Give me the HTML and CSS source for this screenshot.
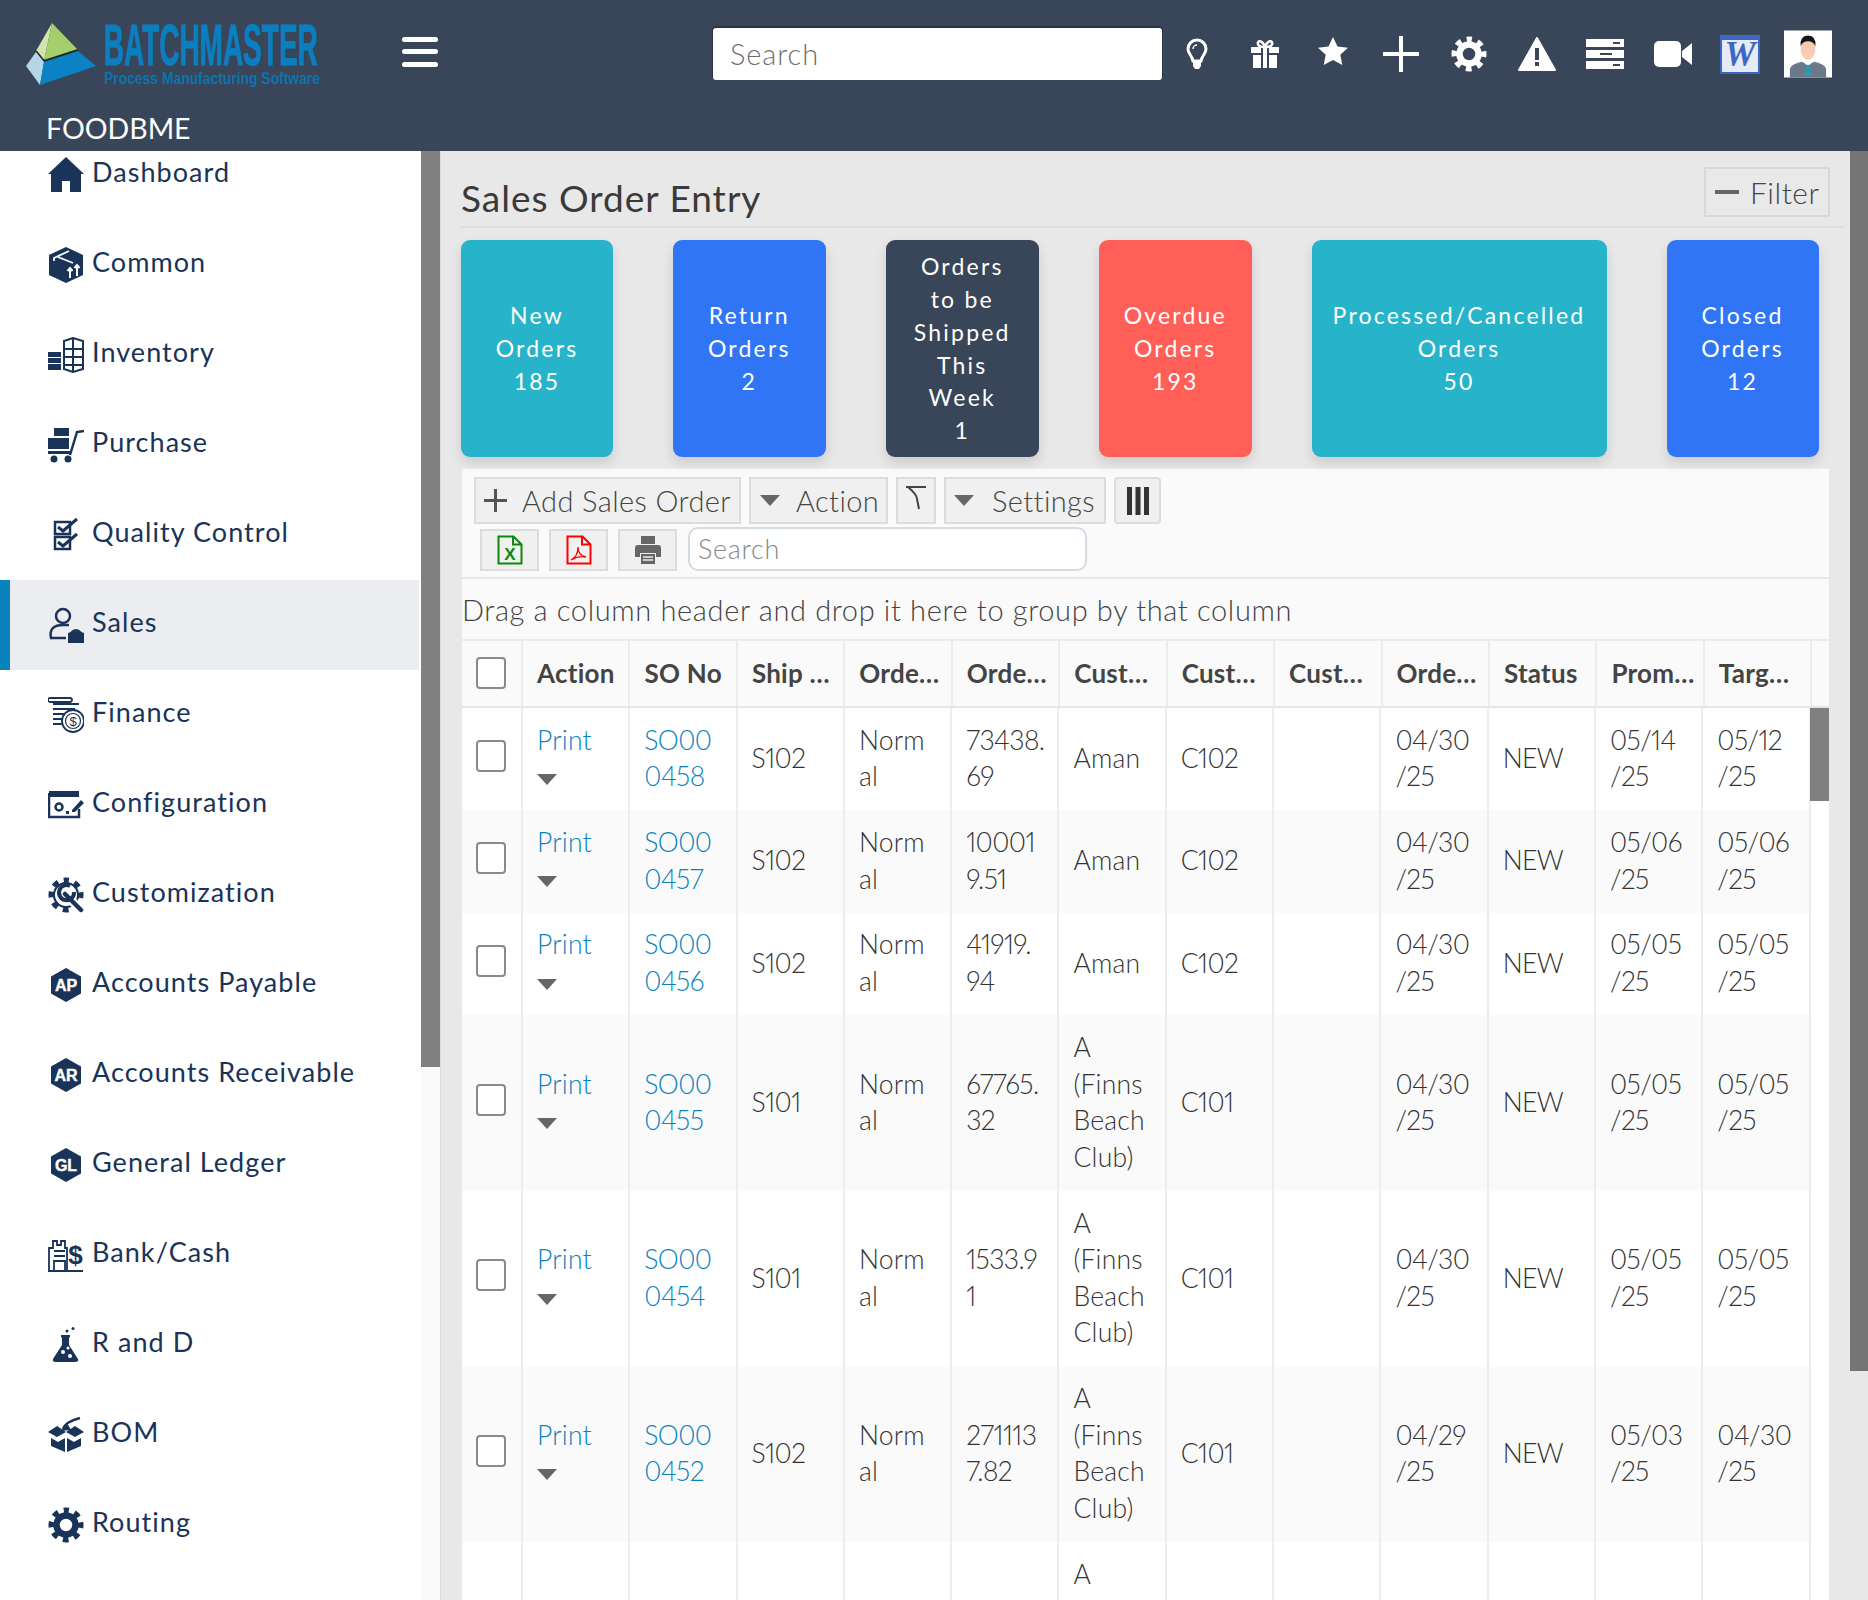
FILE: index.html
```html
<!DOCTYPE html>
<html lang="en">
<head>
<meta charset="utf-8">
<title>Sales Order Entry</title>
<link rel="stylesheet" href="styles.css">
</head>
<body>
<header class="topbar">
  <div class="topbar-row">
    <svg class="logo" viewBox="0 0 310 70" aria-label="BatchMaster">
      <polygon points="26,4 10,32 18,42" fill="#d3e3ae"/>
      <polygon points="26,4 18,42 52,31" fill="#a5cf6d"/>
      <polyline points="10,32 18,42 52,31" fill="none" stroke="#1d2a1e" stroke-width="2"/>
      <polygon points="10,33 0,47 14,66 18,43" fill="#b3d7e8"/>
      <polygon points="18,43 52,32 70,47 14,66" fill="#0a82c4"/>
      <text class="logo-word" x="78" y="46" textLength="214" lengthAdjust="spacingAndGlyphs">BATCHMASTER</text>
      <text class="logo-sub" x="78" y="65" textLength="216" lengthAdjust="spacingAndGlyphs">Process Manufacturing Software</text>
    </svg>
    <button class="burger" aria-label="Menu"><span></span><span></span><span></span></button>
    <div class="top-search">Search</div>
    <div class="top-icons">
      <div class="slot"><svg width="24" height="32" viewBox="0 0 24 32"><path d="M12 2a9 9 0 0 0-9 9c0 5 4 6 5 12h8c1-6 5-7 5-12a9 9 0 0 0-9-9z" fill="none" stroke="#fff" stroke-width="3"/><path d="M8 24h8v4l-2 3h-4l-2-3z" fill="#fff"/><path d="M8 11a4 4 0 0 1 4-4" fill="none" stroke="#fff" stroke-width="1.500"/></svg></div>
      <div class="slot"><svg width="32" height="28" viewBox="0 0 32 28"><path d="M2 7h28v6H2zM4 15h24v13H4z" fill="#fff"/><path d="M12 7h8v21h-8z" fill="#394559"/><path d="M14 7h4v21h-4z" fill="#fff"/><path d="M15 7C11 7 8 5 9 2.500S14 1 16 7c2-6 6-7 7-4.500S21 7 17 7" fill="none" stroke="#fff" stroke-width="2.500"/></svg></div>
      <div class="slot slot-up"><svg width="30" height="28" viewBox="0 0 30 28"><polygon points="15,0 19.500,9.500 30,10.700 22.300,17.800 24.300,28 15,23 5.700,28 7.700,17.800 0,10.700 10.500,9.500" fill="#fff"/></svg></div>
      <div class="slot"><svg width="36" height="36" viewBox="0 0 36 36"><path d="M18 1v34M1 18h34" stroke="#fff" stroke-width="4" stroke-linecap="round"/></svg></div>
      <div class="slot"><svg class="ic-light" width="36" height="36" viewBox="0 0 36 36"><use href="#gear"/></svg></div>
      <div class="slot"><svg width="38" height="34" viewBox="0 0 38 34"><path d="M19 1 37 33H1z" fill="#fff" stroke="#fff" stroke-width="2" stroke-linejoin="round"/><path d="M17 11h4v12h-4zM17 25h4v4h-4z" fill="#394559"/></svg></div>
      <div class="slot"><svg width="38" height="30" viewBox="0 0 38 30"><path d="M0 0h38v8H0zM0 11h38v8H0zM0 22h38v8H0z" fill="#fff"/><path d="M27 3h7v2h-7zM14 14h12v2H14zM27 25h7v2h-7z" fill="#394559"/></svg></div>
      <div class="slot"><svg width="38" height="26" viewBox="0 0 38 26"><rect width="27" height="26" rx="5" fill="#fff"/><polygon points="28,10 38,2 38,24 28,16" fill="#fff"/></svg></div>
      <div class="slot slot-word"><svg width="40" height="39" viewBox="0 0 40 39"><rect x="1" y="1" width="38" height="37" fill="#e6eaf6" stroke="#3c67c2" stroke-width="2"/><path d="M1 1h38v4H1z" fill="#3c67c2"/><text class="word-w" x="20" y="31">W</text></svg></div>
      <div class="slot slot-word"><svg width="48" height="48" viewBox="0 0 49 48"><rect width="49" height="48" fill="#fff"/><path d="M6 48V39q2-5 12-7l6.500 3 6.500-3q10 2 12 7v9z" fill="#6b7a88"/><path d="M19 31h11l-5.500 6z" fill="#fff"/><path d="M23 35h3l1.500 11h-6z" fill="#1f9fb0"/><ellipse cx="24.500" cy="19" rx="7.500" ry="11" fill="#f9cdb4"/><path d="M17 16q-1-11 7.500-11T32 16q-2-5-7.500-5T17 16z" fill="#151515"/></svg></div>
    </div>
  </div>
  <div class="tenant">FOODBME</div>
</header>

<svg class="defs" width="0" height="0" aria-hidden="true">
  <symbol id="gear" viewBox="0 0 36 36">
    <circle cx="18" cy="18" r="9.500" fill="none" stroke="currentColor" stroke-width="6.500"/>
    <circle cx="18" cy="18" r="14.500" fill="none" stroke="currentColor" stroke-width="6" stroke-dasharray="5.700 5.690" stroke-dashoffset="2.850" transform="rotate(-90 18 18)"/>
  </symbol>
</svg>

<div class="shell">
  <aside class="sidebar">
    <nav class="side-nav">
      <a class="nav-item nav-first"><svg class="nav-ic" viewBox="0 0 36 36"><path d="M18 0 36 17h-3v18H22V24h-8v11H3V17H0z"/></svg><span>Dashboard</span></a>
      <a class="nav-item"><svg class="nav-ic" viewBox="0 0 36 36"><path d="M18 0 35 8v20l-17 8-17-8V8z"/><path d="M6 14v-3l15-7M10 10l15 6" fill="none" stroke="#fff" stroke-width="1.800"/><path d="M22 31V21m-2.500 3 2.500-3 2.500 3M29 29V18m-2.500 3 2.500-3 2.500 3" fill="none" stroke="#fff" stroke-width="2"/></svg><span>Common</span></a>
      <a class="nav-item"><svg class="nav-ic" viewBox="0 0 36 36"><path d="M0 15h13v5H0zM0 21h13v5H0zM0 27h13v6H0z"/><path d="M16 4l9-3 10 3v28l-10 3-9-3zM25 1v34M16 12h19M16 20h19M16 28h19" fill="none" stroke="#1a3358" stroke-width="2"/></svg><span>Inventory</span></a>
      <a class="nav-item"><svg class="nav-ic" viewBox="0 0 36 36"><path d="M6 1h15v8H6zM0 11h21v11H0zM0 24h22v3H0z"/><path d="M22 28 29 5l7-1" fill="none" stroke="#1a3358" stroke-width="2.500"/><circle cx="6" cy="32" r="3.500"/><circle cx="20" cy="32" r="3.500"/></svg><span>Purchase</span></a>
      <a class="nav-item"><svg class="nav-ic" viewBox="0 0 36 36"><path d="M7 5h15v12H7zM7 20h15v12H7z" fill="none" stroke="#1a3358" stroke-width="2.500"/><path d="M10 10l5 4 14-12M10 25l5 4 14-12" fill="none" stroke="#1a3358" stroke-width="3"/></svg><span>Quality Control</span></a>
      <a class="nav-item nav-active"><svg class="nav-ic" viewBox="0 0 36 36"><circle cx="15" cy="9" r="7" fill="none" stroke="#1a3358" stroke-width="2.500"/><path d="M18 31H3c-2-9 3-13 12-13h6" fill="none" stroke="#1a3358" stroke-width="2.500"/><path d="M20 26q8-4 16 0v10H20z"/><path d="M23 26q5-6 10 0" fill="none" stroke="#1a3358" stroke-width="2"/></svg><span>Sales</span></a>
      <a class="nav-item"><svg class="nav-ic" viewBox="0 0 36 36"><path d="M2 1h20a2 2 0 0 1 0 4H2a2 2 0 0 1 0-4zM5 7h26M5 12h22M5 17h14M5 22h14M5 27h14" fill="none" stroke="#1a3358" stroke-width="1.800"/><circle cx="25" cy="24" r="11" fill="#fff" stroke="#1a3358" stroke-width="1.800"/><circle cx="25" cy="24" r="7.500" fill="none" stroke="#1a3358" stroke-width="1.200"/><text class="nav-dollar" x="25" y="28.500">$</text></svg><span>Finance</span></a>
      <a class="nav-item"><svg class="nav-ic" viewBox="0 0 36 36"><path d="M1 4h30v6H1z"/><path d="M1 6h24M1 6v24h30v-8" fill="none" stroke="#1a3358" stroke-width="2.500"/><path d="M24 23l9-10 3 3-9 9h-3z"/><circle cx="11" cy="20" r="3.500" fill="none" stroke="#1a3358" stroke-width="2.500"/><path d="M18 24h3v3h-3z"/></svg><span>Configuration</span></a>
      <a class="nav-item"><svg class="nav-ic" viewBox="0 0 36 36"><use href="#gear"/><circle cx="18" cy="18" r="11.500" fill="#fff"/><circle cx="18" cy="18" r="12" fill="none" stroke="#1a3358" stroke-width="2"/><path d="M15 15 33 33" stroke="#fff" stroke-width="9"/><path d="M17 17l16 16" stroke="#1a3358" stroke-width="4.500" stroke-linecap="round"/><path d="M22 9a7.500 7.500 0 1 0 4 6" fill="none" stroke="#1a3358" stroke-width="4"/></svg><span>Customization</span></a>
      <a class="nav-item"><svg class="nav-ic" viewBox="0 0 36 36"><polygon points="18,1 33,9.500 33,26.500 18,35 3,26.500 3,9.500"/><text class="hex-label" x="18" y="24">AP</text></svg><span>Accounts Payable</span></a>
      <a class="nav-item"><svg class="nav-ic" viewBox="0 0 36 36"><polygon points="18,1 33,9.500 33,26.500 18,35 3,26.500 3,9.500"/><text class="hex-label" x="18" y="24">AR</text></svg><span>Accounts Receivable</span></a>
      <a class="nav-item"><svg class="nav-ic" viewBox="0 0 36 36"><polygon points="18,1 33,9.500 33,26.500 18,35 3,26.500 3,9.500"/><text class="hex-label" x="18" y="24">GL</text></svg><span>General Ledger</span></a>
      <a class="nav-item"><svg class="nav-ic" viewBox="0 0 36 36"><path d="M1 33V11h4V4h4v4h4V4h4v7h2v22M6 14h11M6 19h11M6 33v-9h11v9M0 34h35" fill="none" stroke="#1a3358" stroke-width="1.800"/><text class="nav-big-dollar" x="27.500" y="27">$</text></svg><span>Bank/Cash</span></a>
      <a class="nav-item"><svg class="nav-ic" viewBox="0 0 36 36"><path d="M13 8h9v2l-1 1v7l9 14q1 3-3 3H8q-4 0-3-3l9-14v-7l-1-1z"/><circle cx="19" cy="4" r="1.500"/><circle cx="25" cy="1.500" r="1.500"/><circle cx="15" cy="25" r="2" fill="#fff"/><circle cx="22" cy="29" r="2" fill="#fff"/><circle cx="20" cy="21" r="1.500" fill="#fff"/></svg><span>R and D</span></a>
      <a class="nav-item"><svg class="nav-ic" viewBox="0 0 36 36"><path d="M0 15 9 9l9 6 9-6 9 6-9 5-9-5-9 5zM3 21l7 4 7-4v14L3 29zM33 21l-7 4-7-4v14l14-6z"/><path d="M15 12C17 6 24 3 32 1" fill="none" stroke="#1a3358" stroke-width="2.500"/><path d="M19 6l-6 8 10-1z"/></svg><span>BOM</span></a>
      <a class="nav-item"><svg class="nav-ic" viewBox="0 0 36 36"><use href="#gear"/></svg><span>Routing</span></a>
    </nav>
    <div class="side-track"><div class="side-thumb"></div></div>
  </aside>

  <main class="main">
    <div class="title-row">
      <h1 class="page-title">Sales Order Entry</h1>
      <button class="filter-btn"><span class="minus"></span>Filter</button>
    </div>

    <div class="cards">
      <a class="card c-teal w1">New<br>Orders<br>185</a>
      <a class="card c-blue w2">Return<br>Orders<br>2</a>
      <a class="card c-navy w3">Orders<br>to be<br>Shipped<br>This<br>Week<br>1</a>
      <a class="card c-red w2">Overdue<br>Orders<br>193</a>
      <a class="card c-teal w5">Processed/Cancelled<br>Orders<br>50</a>
      <a class="card c-blue w1">Closed<br>Orders<br>12</a>
    </div>

    <section class="panel">
      <div class="tools-a">
        <button class="tbtn b-add"><svg width="25" height="25" viewBox="0 0 25 25"><path d="M12.500 1v23M1 12.500h23" stroke="#555" stroke-width="3"/></svg>Add Sales Order</button>
        <button class="tbtn b-action"><i class="tri"></i>Action</button>
        <button class="tbtn b-funnel"><svg width="24" height="26" viewBox="0 0 24 26"><path d="M1 2h20M3 2c6 5 9 9 9 12l2 10" fill="none" stroke="#444" stroke-width="2"/></svg></button>
        <button class="tbtn b-settings"><i class="tri"></i>Settings</button>
        <button class="tbtn b-cols"><svg width="24" height="28" viewBox="0 0 24 28"><path d="M1 0h5v28H1zM9.500 0h5v28h-5zM18 0h5v28h-5z" fill="#333"/></svg></button>
      </div>
      <div class="tools-b">
        <button class="ibtn"><svg width="26" height="30" viewBox="0 0 26 30"><path d="M1.500 1.500h15l8 8v19h-23zM16 1.500v8h8" fill="none" stroke="#0a8a0a" stroke-width="2"/><text class="xl" x="13" y="25">X</text></svg></button>
        <button class="ibtn"><svg width="26" height="30" viewBox="0 0 26 30"><path d="M1.500 1.500h15l8 8v19h-23zM16 1.500v8h8" fill="none" stroke="#f00" stroke-width="2"/><path d="M5 25c4-2 7-7 7-13 0 6 3 9 8 10-5-1-10 0-15 3z" fill="none" stroke="#f00" stroke-width="1.300"/></svg></button>
        <button class="ibtn"><svg width="26" height="28" viewBox="0 0 26 28"><path d="M6 0h14v8H6zM3 9h20q3 0 3 3v9h-5v-4H5v4H0v-9q0-3 3-3z" fill="#666"/><path d="M6 18h14v10H6z" fill="#666"/><path d="M8 21h10M8 24h10" stroke="#eee" stroke-width="1.500"/></svg></button>
        <div class="grid-search">Search</div>
      </div>
      <div class="group-hint">Drag a column header and drop it here to group by that column</div>
      <table class="thead">
        <colgroup><col class="c-check"><col span="12" class="c-h"><col></colgroup>
        <tr>
          <th><div class="cb"></div></th><th>Action</th><th>SO No</th><th>Ship …</th><th>Orde…</th><th>Orde…</th><th>Cust…</th><th>Cust…</th><th>Cust…</th><th>Orde…</th><th>Status</th><th>Prom…</th><th>Targ…</th><th></th>
        </tr>
      </table>
      <div class="tbody-wrap">
        <table class="tbody">
          <colgroup><col class="c-check2"><col span="12" class="c-b"></colgroup>
          <tr>
            <td class="ck"><div class="cb"></div></td><td><a class="lnk">Print</a><div class="tri-line"><i class="tri"></i></div></td><td class="n"><a class="lnk">SO00<br>0458</a></td><td class="n">S102</td><td>Norm<br>al</td><td class="n">73438.<br>69</td><td>Aman</td><td class="n">C102</td><td></td><td class="n">04/30<br>/25</td><td class="n">NEW</td><td class="n">05/14<br>/25</td><td class="n">05/12<br>/25</td>
          </tr>
          <tr>
            <td class="ck"><div class="cb"></div></td><td><a class="lnk">Print</a><div class="tri-line"><i class="tri"></i></div></td><td class="n"><a class="lnk">SO00<br>0457</a></td><td class="n">S102</td><td>Norm<br>al</td><td class="n">10001<br>9.51</td><td>Aman</td><td class="n">C102</td><td></td><td class="n">04/30<br>/25</td><td class="n">NEW</td><td class="n">05/06<br>/25</td><td class="n">05/06<br>/25</td>
          </tr>
          <tr>
            <td class="ck"><div class="cb"></div></td><td><a class="lnk">Print</a><div class="tri-line"><i class="tri"></i></div></td><td class="n"><a class="lnk">SO00<br>0456</a></td><td class="n">S102</td><td>Norm<br>al</td><td class="n">41919.<br>94</td><td>Aman</td><td class="n">C102</td><td></td><td class="n">04/30<br>/25</td><td class="n">NEW</td><td class="n">05/05<br>/25</td><td class="n">05/05<br>/25</td>
          </tr>
          <tr>
            <td class="ck"><div class="cb"></div></td><td><a class="lnk">Print</a><div class="tri-line"><i class="tri"></i></div></td><td class="n"><a class="lnk">SO00<br>0455</a></td><td class="n">S101</td><td>Norm<br>al</td><td class="n">67765.<br>32</td><td>A<br>(Finns<br>Beach<br>Club)</td><td class="n">C101</td><td></td><td class="n">04/30<br>/25</td><td class="n">NEW</td><td class="n">05/05<br>/25</td><td class="n">05/05<br>/25</td>
          </tr>
          <tr>
            <td class="ck"><div class="cb"></div></td><td><a class="lnk">Print</a><div class="tri-line"><i class="tri"></i></div></td><td class="n"><a class="lnk">SO00<br>0454</a></td><td class="n">S101</td><td>Norm<br>al</td><td class="n">1533.9<br>1</td><td>A<br>(Finns<br>Beach<br>Club)</td><td class="n">C101</td><td></td><td class="n">04/30<br>/25</td><td class="n">NEW</td><td class="n">05/05<br>/25</td><td class="n">05/05<br>/25</td>
          </tr>
          <tr>
            <td class="ck"><div class="cb"></div></td><td><a class="lnk">Print</a><div class="tri-line"><i class="tri"></i></div></td><td class="n"><a class="lnk">SO00<br>0452</a></td><td class="n">S102</td><td>Norm<br>al</td><td class="n">271113<br>7.82</td><td>A<br>(Finns<br>Beach<br>Club)</td><td class="n">C101</td><td></td><td class="n">04/29<br>/25</td><td class="n">NEW</td><td class="n">05/03<br>/25</td><td class="n">04/30<br>/25</td>
          </tr>
          <tr class="row-cut">
            <td class="ck"></td><td></td><td></td><td></td><td></td><td></td><td>A</td><td></td><td></td><td></td><td></td><td></td><td></td>
          </tr>
        </table>
        <div class="grid-thumb"></div>
      </div>
    </section>
  </main>
  <div class="page-track"><div class="page-thumb"></div></div>
</div>
</body>
</html>
```

FILE: styles.css
```css
* { box-sizing: border-box; }
html, body { margin: 0; height: 1600px; overflow: hidden; }
body { font-family: Lato, "Noto Sans", sans-serif; color: #444; background: #e8e8e8; }
button { font-family: inherit; padding: 0; cursor: pointer; }
.defs { position: absolute; }

.topbar { height: 151px; background: #394559; color: #fff; }
.topbar-row { height: 108px; display: flex; align-items: center; padding-left: 26px; }
.logo { width: 310px; height: 70px; overflow: visible; flex: none; }
.logo-word { font: bold 57px "Liberation Sans Narrow", "Liberation Sans", sans-serif; fill: #0a7fc0; stroke: #0a7fc0; stroke-width: .8px; }
.logo-sub { font: bold 16px "Liberation Sans Narrow", "Liberation Sans", sans-serif; fill: #0b74ad; }
.burger { margin: 0 0 5px 66px; width: 36px; height: 30px; flex: none; background: none; border: 0; display: flex; flex-direction: column; justify-content: space-between; }
.burger span { display: block; height: 5px; border-radius: 3px; background: #fff; }
.top-search { margin-left: 275px; width: 449px; height: 52px; flex: none; display: flex; align-items: center; padding: 0 0 2px 17px; background: #fff; border-radius: 3px; box-shadow: 0 -1px 0 1px #2b3445; font-size: 29px; letter-spacing: .9px; font-weight: 300; color: #6f6f6f; }
.top-icons { display: flex; margin-left: 1px; }
.slot { width: 68px; height: 52px; display: flex; align-items: center; justify-content: center; flex: none; }
.slot-up { padding-bottom: 6px; }
.slot-word { padding-right: 2px; }
.ic-light { color: #fff; }
.word-w { font: italic bold 35px "Liberation Serif", serif; fill: #3c67c2; text-anchor: middle; }
.tenant { padding-left: 46px; height: 41px; line-height: 41px; font-size: 28.500px; }

.shell { display: flex; height: 1449px; }
.sidebar { width: 440px; flex: none; display: flex; background: #fff; overflow: hidden; }
.side-nav { width: 421px; flex: none; display: flex; flex-direction: column; padding-right: 2px; }
.nav-item { height: 90px; flex: none; display: flex; align-items: center; gap: 8px; padding-left: 48px; color: #1a3358; fill: #1a3358; font-size: 27px; letter-spacing: 1.050px; }
.nav-item span { padding-bottom: 7px; }
.nav-first { margin-top: -21px; }
.nav-ic { width: 36px; height: 36px; flex: none; fill: #1a3358; color: #1a3358; }
.nav-active { background: #ecedf1; border-left: 10px solid #0a82bd; padding-left: 38px; }
.hex-label { font: bold 16px "Liberation Sans", sans-serif; fill: #fff; stroke: #fff; stroke-width: .4px; text-anchor: middle; letter-spacing: 0; }
.nav-dollar { font: 13px "Liberation Sans", sans-serif; text-anchor: middle; letter-spacing: 0; }
.nav-big-dollar { font: bold 26px "Liberation Sans", sans-serif; text-anchor: middle; letter-spacing: 0; }
.side-track { width: 19px; background: #fafafa; }
.side-thumb { height: 916px; background: #808080; }

.main { flex: 1; min-width: 0; padding: 0 21px 0 21px; overflow: hidden; background: #e8e8e8; border-left: 1px solid #ddd; }
.title-row { height: 77px; display: flex; justify-content: space-between; align-items: flex-start; border-bottom: 2px solid #dfdfdf; margin-right: -16px; padding-right: 16px; margin-left: -1px; }
.page-title { margin: 28px 0 0; font-size: 37px; line-height: 38px; letter-spacing: 1px; font-weight: 400; color: #3a3a3a; }
.filter-btn { margin-top: 16px; margin-right: -1px; width: 126px; height: 50px; display: flex; align-items: center; gap: 11px; padding-left: 9px; background: #e9e9e9; border: 2px solid #d8d8d8; font-size: 30px; letter-spacing: .5px; font-weight: 300; color: #444; }
.minus { width: 24px; height: 4px; background: #666; }

.cards { display: flex; gap: 60px; margin-top: 12px; margin-left: -1px; }
.card { height: 217px; display: flex; align-items: center; justify-content: center; text-align: center; color: #fff; border-radius: 9px; font-size: 23px; font-weight: 400; line-height: 32.700px; letter-spacing: 2.200px; box-shadow: 0 6px 12px rgba(0,0,0,.12); white-space: nowrap; }
.w1 { width: 152px; } .w2 { width: 152.500px; } .w3 { width: 153.500px; } .w5 { width: 295px; }
.c-teal { background: #27b3c9; } .c-blue { background: #2f75f5; } .c-navy { background: #394559; } .c-red { background: #ff5f57; }

.panel { margin-top: 11px; margin-left: 0; width: 1367px; background: #fafafa; border-top: 1px solid #eee; }
.tools-a { display: flex; gap: 8px; padding: 8px 0 0 12px; }
.tbtn { height: 47px; display: flex; align-items: center; gap: 14px; padding-left: 7px; background: #f0f0f0; border: 2px solid #dcdcdc; font-size: 29px; letter-spacing: .4px; font-weight: 300; color: #444; white-space: nowrap; }
.b-add { width: 267px; } .b-action { width: 139px; padding-left: 9px; gap: 16px; } .b-funnel { width: 40px; padding: 0 0 6px 7px; } .b-settings { width: 162px; padding-left: 8px; gap: 18px; } .b-cols { width: 47px; border-radius: 4px; padding-left: 10px; }
.tri { display: inline-block; flex: none; width: 0; height: 0; border-left: 10px solid transparent; border-right: 10px solid transparent; border-top: 11px solid #666; }
.tools-b { display: flex; align-items: flex-end; padding: 3px 0 6px 18px; border-bottom: 2px solid #e8e8e8; }
.ibtn { width: 59px; height: 42px; margin-right: 10px; display: flex; align-items: center; justify-content: center; background: #f0f0f0; border: 2px solid #dcdcdc; }
.xl { font: bold 17px "Liberation Sans", sans-serif; fill: #0a8a0a; text-anchor: middle; }
.grid-search { width: 399px; height: 44px; margin-left: 1px; display: flex; align-items: center; padding: 0 0 2px 8px; background: #fff; border: 2px solid #d5dbe3; border-radius: 10px; font-size: 27px; letter-spacing: .7px; font-weight: 300; color: #888; }
.group-hint { height: 62px; line-height: 61px; font-size: 29px; letter-spacing: .65px; font-weight: 300; color: #444; border-bottom: 2px solid #ececec; white-space: nowrap; }

table { border-collapse: separate; border-spacing: 0; table-layout: fixed; }
.thead { width: 1367px; border-bottom: 2px solid #e6e6e6; }
.c-check { width: 61px; } .c-h { width: 107.450px; }
.thead th { height: 65px; padding: 0 0 2px 14px; border-right: 2px solid #ececec; text-align: left; font-size: 26px; letter-spacing: .25px; font-weight: 700; color: #444; white-space: nowrap; overflow: hidden; background: #fafafa; }
.thead th:last-child { border-right: 0; }

.tbody-wrap { position: relative; height: 900px; background: #fff; }
.tbody { width: 1348.600px; }
.c-check2 { width: 61px; } .c-b { width: 107.300px; }
.tbody td { padding: 13.500px 0 15.800px 14px; border-right: 2px solid #ededed; font-size: 26.500px; line-height: 36.600px; letter-spacing: .2px; font-variant-numeric: proportional-nums; font-weight: 300; color: #333; white-space: nowrap; vertical-align: middle; overflow: hidden; }
.tbody td.n { letter-spacing: -.6px; }
.tbody td.ck { padding-top: 10px; padding-bottom: 17px; }
.tbody tr:nth-child(even) td { background: #fafafa; }
.tbody .row-cut td { height: 70px; vertical-align: top; }
.lnk { color: #0a82bd; }
.tri-line { height: 36.600px; padding-top: 6px; display: flex; align-items: center; }
.cb { width: 30px; height: 32px; background: #fff; border: 2px solid #8a8a8a; border-radius: 4px; }
.grid-thumb { position: absolute; top: 0; right: 0; width: 19px; height: 93px; background: #808080; }

.page-track { width: 18px; flex: none; background: #e8e8e8; }
.page-thumb { height: 1220px; background: #757575; }
```
